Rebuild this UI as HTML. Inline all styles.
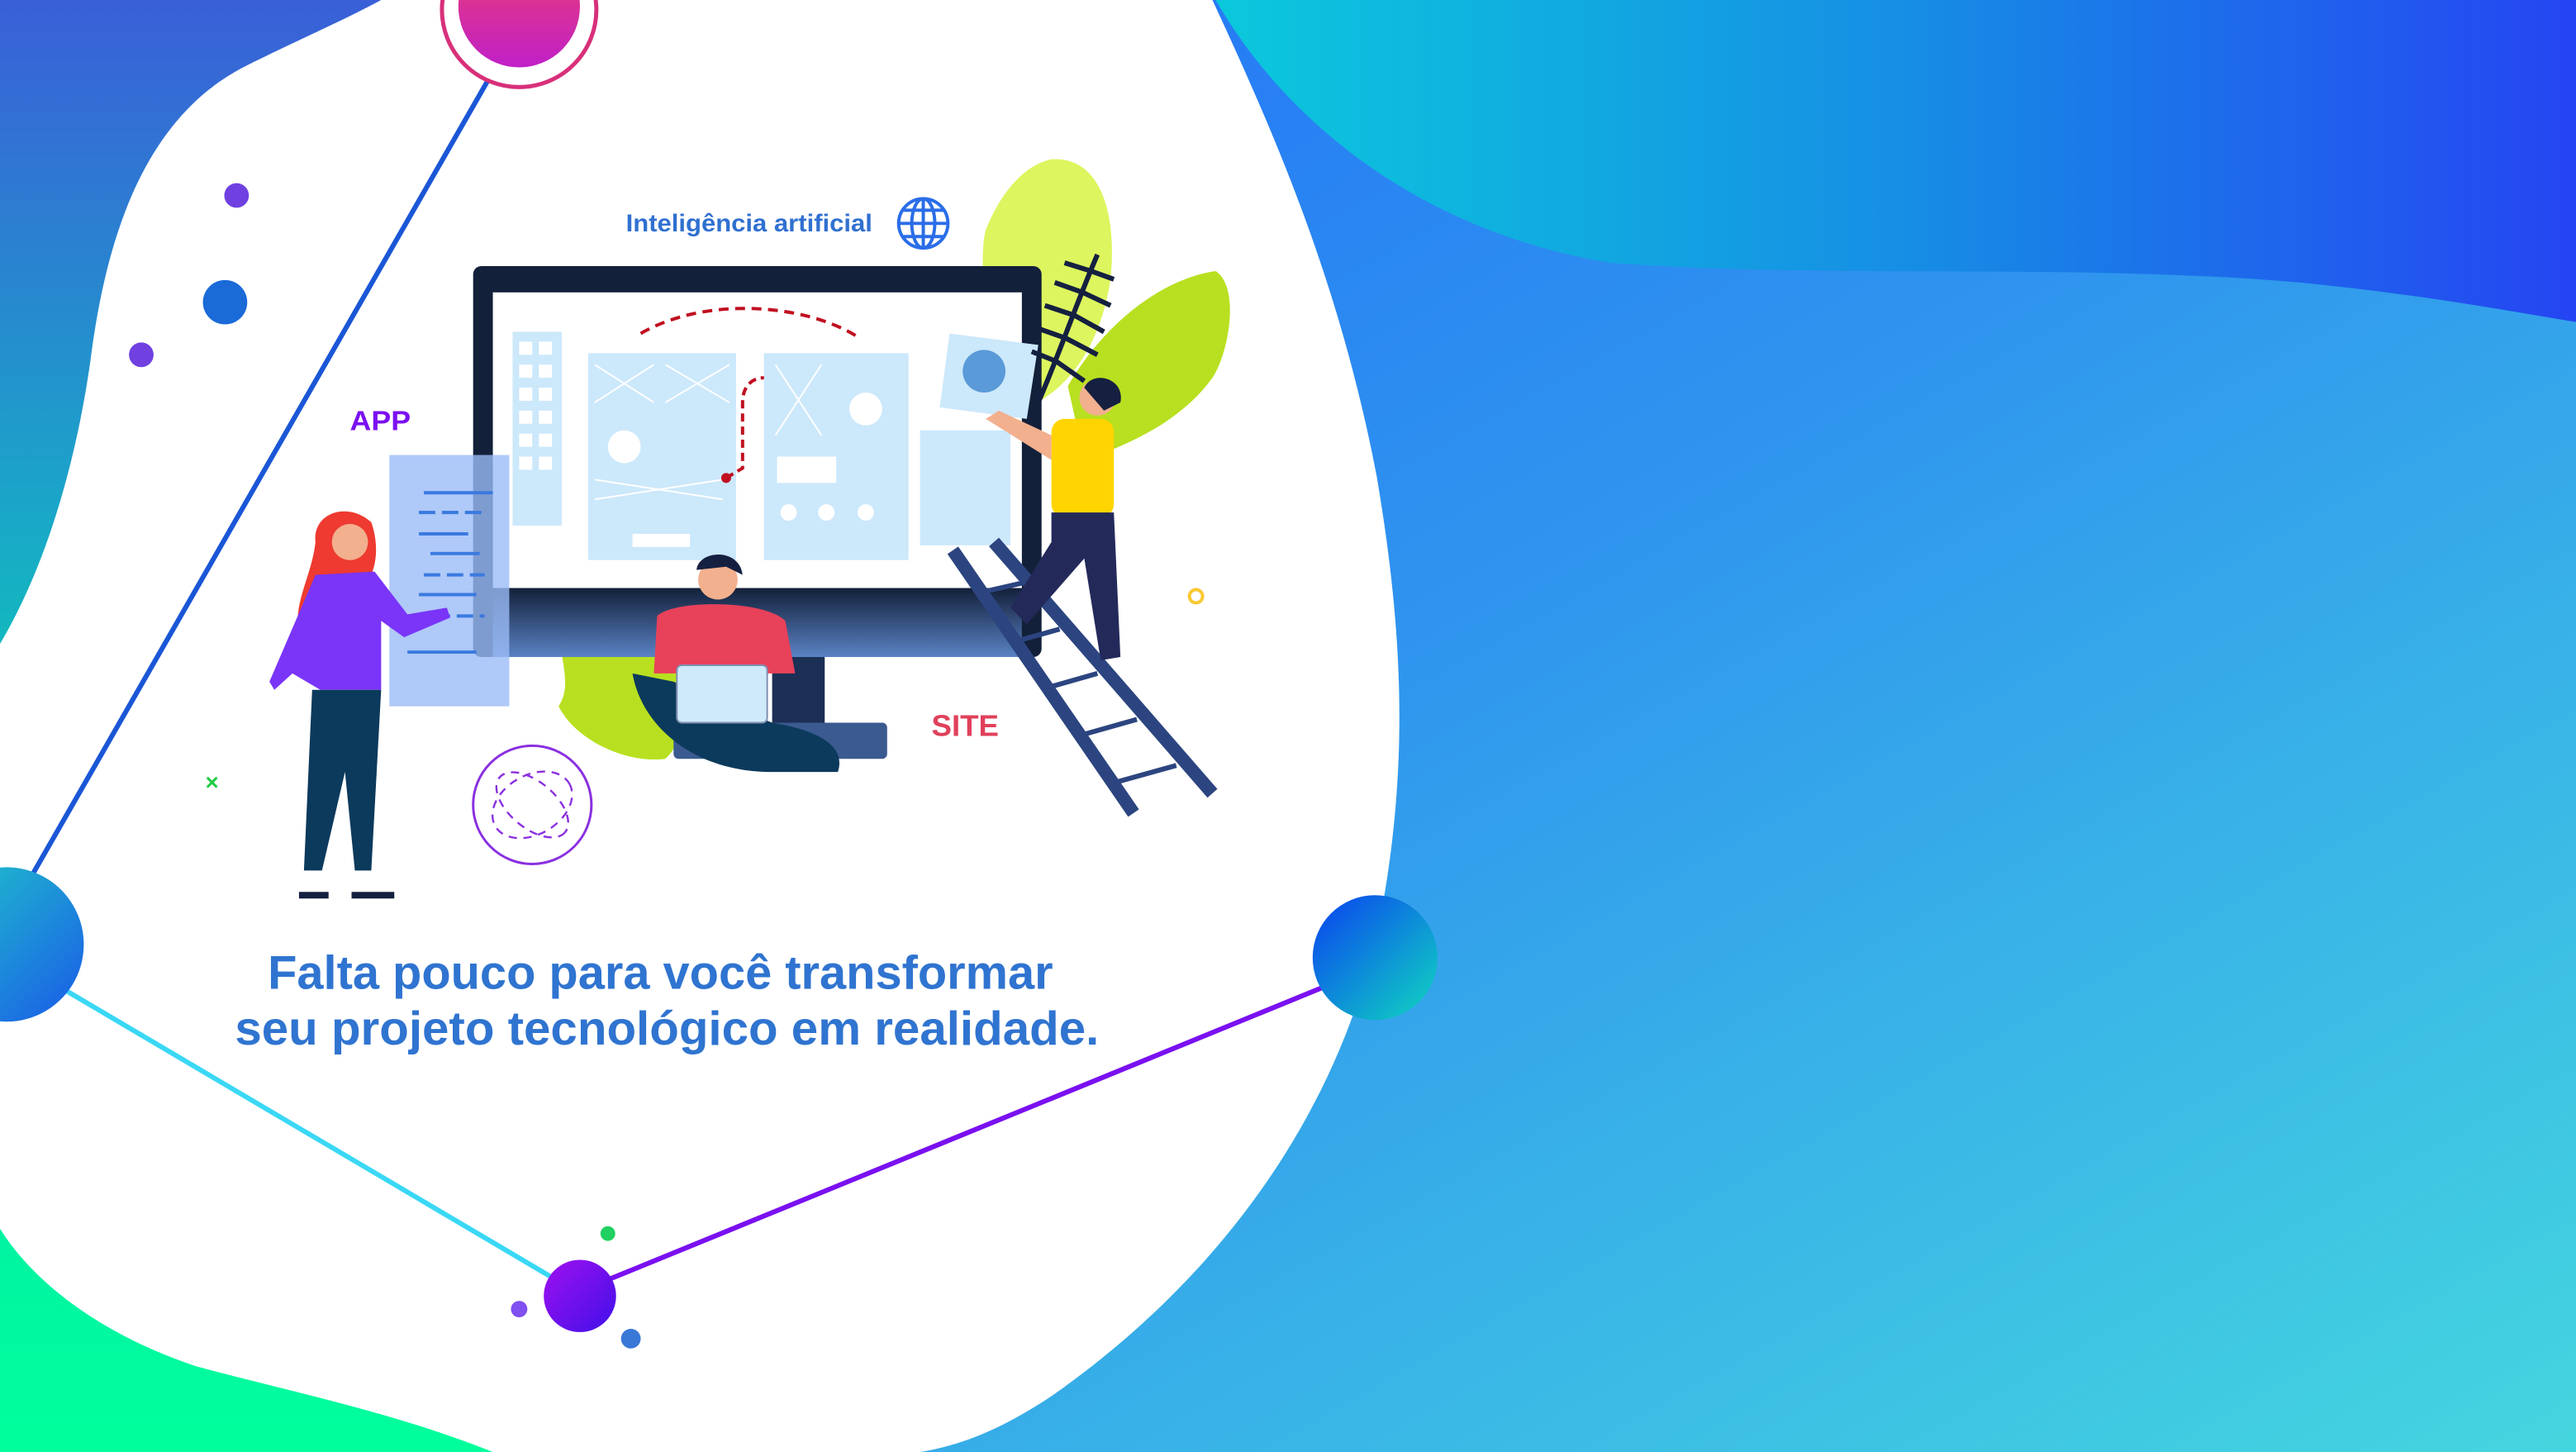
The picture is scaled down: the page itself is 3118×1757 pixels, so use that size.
<!DOCTYPE html>
<html><head><meta charset="utf-8">
<style>
html,body{margin:0;padding:0;overflow:hidden;background:#2a80f0}
svg{display:block}
text{font-family:"Liberation Sans",sans-serif;font-weight:bold}
</style></head>
<body>
<svg width="3118" height="1757" viewBox="0 0 1568 884" preserveAspectRatio="none" xmlns="http://www.w3.org/2000/svg">
<defs>
<linearGradient id="bg" x1="0" y1="0" x2="1" y2="1">
<stop offset="0" stop-color="#1f66fb"/><stop offset="0.5" stop-color="#2f95ee"/><stop offset="1" stop-color="#44d6df"/>
</linearGradient>
<linearGradient id="tr" x1="0" y1="0" x2="1" y2="0">
<stop offset="0" stop-color="#0bc8dc"/><stop offset="0.5" stop-color="#168fe4"/><stop offset="1" stop-color="#2545f2"/>
</linearGradient>
<linearGradient id="lf" x1="0" y1="0" x2="0" y2="1">
<stop offset="0" stop-color="#3a5fd8"/><stop offset="0.35" stop-color="#1aa6c8"/><stop offset="0.7" stop-color="#00e8a8"/><stop offset="1" stop-color="#00ff9c"/>
</linearGradient>
<linearGradient id="pink" x1="0" y1="0" x2="0" y2="1"><stop offset="0" stop-color="#f0406a"/><stop offset="1" stop-color="#c020c8"/></linearGradient>
<linearGradient id="lc" x1="0" y1="0" x2="1" y2="1"><stop offset="0" stop-color="#20c8c8"/><stop offset="1" stop-color="#1a5ae8"/></linearGradient>
<linearGradient id="rc" x1="0" y1="0" x2="1" y2="1"><stop offset="0" stop-color="#0a40f0"/><stop offset="1" stop-color="#10d8c0"/></linearGradient>
<linearGradient id="pc" x1="0" y1="0" x2="1" y2="1"><stop offset="0" stop-color="#a010f0"/><stop offset="1" stop-color="#4010e8"/></linearGradient>
<linearGradient id="bez" x1="0" y1="0" x2="0" y2="1"><stop offset="0" stop-color="#13203a"/><stop offset="1" stop-color="#5a82c4"/></linearGradient>
</defs>
<rect width="1568" height="884" fill="url(#bg)"/>
<path d="M740,0 C780,70 860,140 980,160 C1120,170 1260,160 1400,172 C1480,180 1530,190 1568,196 L1568,0 Z" fill="url(#tr)"/>
<rect x="0" y="0" width="302" height="884" fill="url(#lf)"/>
<!-- white blob -->
<path d="M232,0 L738,0 C775,80 815,170 838,290 C855,390 857,470 840,560 C815,680 740,780 640,850 C610,870 585,880 560,884 L300,884 C240,860 180,848 120,832 C60,812 20,780 0,748 L0,392 C25,350 45,290 55,220 C65,140 90,70 150,40 C180,25 210,12 232,0 Z" fill="#fff"/>
<!-- lines -->
<line x1="305" y1="35" x2="20" y2="532" stroke="#1a56d6" stroke-width="3"/>
<line x1="40" y1="603" x2="345" y2="783" stroke="#3ad8f5" stroke-width="3"/>
<line x1="368" y1="780" x2="808" y2="600" stroke="#7a10f0" stroke-width="3"/>
<!-- circles -->
<circle cx="316" cy="6" r="47" fill="#fff" stroke="#d8307a" stroke-width="2.5"/>
<circle cx="316" cy="4" r="37" fill="url(#pink)"/>
<circle cx="4" cy="575" r="47" fill="url(#lc)"/>
<circle cx="837" cy="583" r="38" fill="url(#rc)"/>
<circle cx="353" cy="789" r="22" fill="url(#pc)"/>
<circle cx="144" cy="119" r="7.5" fill="#7040e0"/>
<circle cx="137" cy="184" r="13.5" fill="#1a6ad8"/>
<circle cx="86" cy="216" r="7.5" fill="#7040e0"/>
<circle cx="370" cy="751" r="4.5" fill="#20d060"/>
<circle cx="316" cy="797" r="5" fill="#8050f0"/>
<circle cx="384" cy="815" r="6" fill="#3a78d8"/>
<circle cx="728" cy="363" r="4" fill="none" stroke="#f8c830" stroke-width="2"/>
<text x="125" y="481" font-size="14" fill="#22cc44">×</text>
<!-- leaves -->
<path d="M640,97 C670,95 680,130 676,170 C670,210 650,240 620,250 C600,210 595,160 600,140 C610,115 625,100 640,97 Z" fill="#ddf55e"/>
<path d="M740,165 C755,175 748,215 738,230 C720,255 690,270 660,280 L650,235 C670,200 705,170 740,165 Z" fill="#b8e020"/>
<path d="M345,352 C375,350 405,372 415,400 C422,425 418,450 405,462 C380,465 350,450 340,430 C352,412 332,392 345,352 Z" fill="#b8e020"/>
<!-- monitor -->
<rect x="470" y="395" width="32" height="55" fill="#1c2f55"/>
<rect x="410" y="440" width="130" height="22" rx="3" fill="#3a5a90"/>
<rect x="288" y="162" width="346" height="238" rx="5" fill="#13203a"/>
<rect x="300" y="358" width="322" height="42" fill="url(#bez)"/>
<rect x="300" y="178" width="322" height="180" fill="#fff"/>
<g fill="#cce8fb">
<rect x="312" y="202" width="30" height="118"/>
<rect x="358" y="215" width="90" height="126"/>
<rect x="465" y="215" width="88" height="126"/>
<rect x="560" y="262" width="55" height="70"/>
<path d="M578,203 L632,210 L625,255 L572,248 Z"/>
</g>
<g fill="#fff"><rect x="316" y="208" width="8" height="8"/><rect x="328" y="208" width="8" height="8"/><rect x="316" y="222" width="8" height="8"/><rect x="328" y="222" width="8" height="8"/><rect x="316" y="236" width="8" height="8"/><rect x="328" y="236" width="8" height="8"/><rect x="316" y="250" width="8" height="8"/><rect x="328" y="250" width="8" height="8"/><rect x="316" y="264" width="8" height="8"/><rect x="328" y="264" width="8" height="8"/><rect x="316" y="278" width="8" height="8"/><rect x="328" y="278" width="8" height="8"/>
<circle cx="380" cy="272" r="10"/><circle cx="527" cy="249" r="10"/><rect x="473" y="278" width="36" height="16"/>
<circle cx="480" cy="312" r="5"/><circle cx="503" cy="312" r="5"/><circle cx="527" cy="312" r="5"/><rect x="385" y="325" width="35" height="8"/></g>
<g stroke="#fff" stroke-width="1"><path d="M362,222 L398,245 M398,222 L362,245 M405,222 L444,245 M444,222 L405,245 M472,222 L500,265 M500,222 L472,265 M362,292 L440,304 M440,292 L362,304"/></g>
<circle cx="599" cy="226" r="13" fill="#5a9ad8"/>
<path d="M390,203 C430,180 490,185 522,205" fill="none" stroke="#c01020" stroke-width="2" stroke-dasharray="6 4"/>
<path d="M442,291 L452,285 L452,245 C452,235 458,230 465,230" fill="none" stroke="#c01020" stroke-width="2" stroke-dasharray="5 3"/>
<circle cx="442" cy="291" r="3" fill="#c01020"/>
<!-- palm -->
<g stroke="#152040" stroke-width="3" fill="none"><path d="M668,155 C655,185 645,215 632,245"/>
<path d="M664,165 L648,160 M664,165 L678,170 M659,178 L642,172 M659,178 L676,186 M654,192 L636,186 M654,192 L672,202 M649,206 L632,200 M649,206 L668,216 M643,220 L628,214 M643,220 L660,232"/></g>
<!-- app panel -->
<rect x="237" y="277" width="73" height="153" fill="#9bbcf6" opacity="0.8"/>
<g stroke="#3a7ae0" stroke-width="2">
<line x1="258" y1="300" x2="300" y2="300"/><line x1="255" y1="312" x2="295" y2="312" stroke-dasharray="10 4"/>
<line x1="255" y1="325" x2="285" y2="325"/><line x1="262" y1="337" x2="292" y2="337"/>
<line x1="258" y1="350" x2="295" y2="350" stroke-dasharray="10 4"/><line x1="255" y1="362" x2="290" y2="362"/>
<line x1="250" y1="375" x2="295" y2="375" stroke-dasharray="10 4"/><line x1="248" y1="397" x2="290" y2="397"/></g>
<!-- ladder -->
<path d="M580,335 L690,495 M605,330 L738,483" stroke="#2c4580" stroke-width="8"/>
<g stroke="#2c4580" stroke-width="3"><line x1="600" y1="360" x2="622" y2="355"/><line x1="620" y1="390" x2="645" y2="383"/><line x1="640" y1="418" x2="668" y2="410"/><line x1="660" y1="447" x2="692" y2="438"/><line x1="680" y1="476" x2="716" y2="466"/></g>
<!-- ladder man -->
<rect x="640" y="255" width="38" height="60" rx="8" fill="#ffd400"/>
<path d="M640,312 L678,312 L682,400 L670,402 L660,340 L625,380 L615,370 L640,330 Z" fill="#232a5a"/>
<circle cx="668" cy="242" r="11" fill="#f2b08e"/><path d="M660,236 C665,225 685,230 682,245 L672,250 Z" fill="#152040"/>
<path d="M640,265 L608,250 L600,255 L640,280" fill="#f2b08e"/>
<!-- sitting man -->
<path d="M385,410 C390,440 420,470 470,470 L510,470 C515,455 500,445 470,440 L410,415 Z" fill="#0c3a5c"/>
<path d="M400,375 C410,365 465,365 478,378 L484,410 L398,410 Z" fill="#e8415a"/>
<circle cx="437" cy="353" r="12" fill="#f2b08e"/><path d="M424,347 C425,335 450,333 452,350 L442,345 Z" fill="#152040"/>
<rect x="412" y="405" width="55" height="35" rx="3" fill="#cfeafb" stroke="#8090b0"/>
<!-- woman -->
<path d="M192,330 C190,312 212,305 226,318 C232,335 228,352 220,358 L182,385 C178,368 190,350 192,330 Z" fill="#ee3a30"/>
<circle cx="213" cy="330" r="11" fill="#f2b08e"/>
<path d="M192,350 L228,348 L248,374 L272,370 L274,376 L246,388 L232,378 L232,420 L195,420 L178,410 L167,420 L164,415 Z" fill="#7a35f8"/>
<path d="M190,420 L232,420 L226,530 L216,530 L210,470 L196,530 L185,530 Z" fill="#0c3a5c"/>
<path d="M182,545 L200,545 M214,545 L240,545" stroke="#152040" stroke-width="4"/>
<!-- dashed globe -->
<circle cx="324" cy="490" r="36" fill="none" stroke="#8a30e0" stroke-width="1.5"/>
<ellipse cx="324" cy="490" rx="26" ry="18" fill="none" stroke="#8a30e0" stroke-width="1.2" stroke-dasharray="5 4" transform="rotate(-30 324 490)"/>
<ellipse cx="324" cy="490" rx="26" ry="14" fill="none" stroke="#8a30e0" stroke-width="1.2" stroke-dasharray="5 4" transform="rotate(40 324 490)"/>
<!-- labels -->
<text x="381" y="141" font-size="15" fill="#3070d0" textLength="150" lengthAdjust="spacingAndGlyphs">Inteligência artificial</text>
<g fill="none" stroke="#2a6de8" stroke-width="2"><circle cx="562" cy="136" r="15"/><ellipse cx="562" cy="136" rx="7" ry="15"/><line x1="547" y1="136" x2="577" y2="136"/><line x1="550" y1="128" x2="574" y2="128"/><line x1="550" y1="144" x2="574" y2="144"/><line x1="562" y1="121" x2="562" y2="151"/></g>
<text x="213" y="262" font-size="17" fill="#7a10f0" textLength="37" lengthAdjust="spacingAndGlyphs">APP</text>
<text x="567" y="448" font-size="18" fill="#e0405a" textLength="41" lengthAdjust="spacingAndGlyphs">SITE</text>
<text x="163" y="602" font-size="29" fill="#2f74d0" style="font-weight:600" textLength="478" lengthAdjust="spacingAndGlyphs">Falta pouco para você transformar</text>
<text x="143" y="636" font-size="29" fill="#2f74d0" style="font-weight:600" textLength="526" lengthAdjust="spacingAndGlyphs">seu projeto tecnológico em realidade.</text>
</svg>
</body></html>
